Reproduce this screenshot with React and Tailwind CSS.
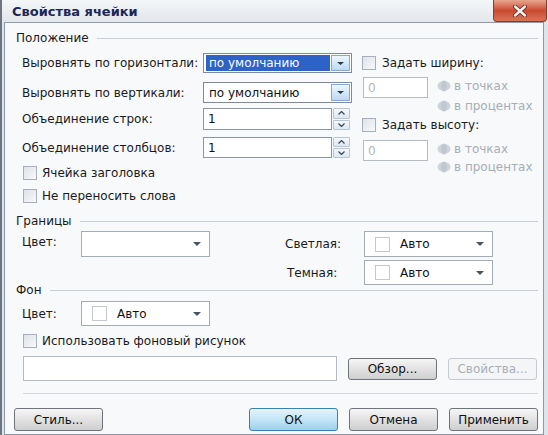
import React from 'react';

const font = { fontFamily: '"DejaVu Sans", Verdana, sans-serif' };

const Heading = ({ title, className = '' }) => (
  <div className={`flex items-center ${className}`}>
    <span>{title}</span>
    <div className="ml-[8px] h-px flex-1 bg-[#c8ced6]" />
  </div>
);

const Checkbox = () => (
  <div className="h-[14px] w-[14px] shrink-0 border border-[#a7afba] bg-gradient-to-br from-[#dfe3e8] to-[#f7f8fa]" />
);

const SmallArrow = ({ up }) => (
  <svg width="7" height="4" viewBox="0 0 7 4" className={up ? 'rotate-180' : ''}>
    <path d="M0.5 0.5 L3.5 3.5 L6.5 0.5" fill="none" stroke="#3b4a5c" strokeWidth="1.3" />
  </svg>
);

const Triangle = () => (
  <svg width="8" height="4" viewBox="0 0 8 4">
    <path d="M0 0 H8 L4 4 Z" fill="#4a5360" />
  </svg>
);

const WinSelect = ({ value, selected }) => (
  <div className="flex h-full w-[149px] items-center border border-[#7d8a9c] bg-white">
    <div
      className={`ml-[2px] flex h-[16px] flex-1 items-center pl-[3px] ${
        selected ? 'bg-[#2d62c8] text-white' : 'text-[#111]'
      }`}
    >
      {value}
    </div>
    <div className="mx-[1px] flex h-[calc(100%-2px)] w-[19px] items-center justify-center border border-[#86a9d2] bg-gradient-to-b from-[#eef6fd] to-[#b9dbf3]">
      <svg width="7" height="3" viewBox="0 0 7 3">
        <path d="M0 0 H7 L3.5 3 Z" fill="#2c3a4c" />
      </svg>
    </div>
  </div>
);

const SpinInput = () => (
  <div className="flex h-full items-stretch">
    <div className="flex w-[129px] items-center border border-[#8a96a6] bg-white pl-[4px] text-[#111]">1</div>
    <div className="ml-[1px] flex w-[17px] flex-col gap-[1px]">
      <div className="flex flex-1 items-center justify-center rounded-[1px] border border-[#b7c6d6] bg-gradient-to-b from-[#f6f9fc] to-[#dde7f1]">
        <SmallArrow up />
      </div>
      <div className="flex flex-1 items-center justify-center rounded-[1px] border border-[#b7c6d6] bg-gradient-to-b from-[#f6f9fc] to-[#dde7f1]">
        <SmallArrow />
      </div>
    </div>
  </div>
);

const Radio = () => (
  <svg width="14" height="12" viewBox="0 0 14 12" className="shrink-0">
    <ellipse cx="7" cy="6" rx="6.5" ry="5" fill="#cfd4da" />
    <ellipse cx="7" cy="6" rx="3" ry="5.5" fill="#c2c8cf" />
  </svg>
);

const SizeBlock = ({ gap }) => (
  <div className="flex">
    <div className="ml-[1px] flex h-[21px] w-[65px] items-center border border-[#b6bcc4] bg-white pl-[4px] text-[#b0b6bd]">
      0
    </div>
    <div className={`ml-[9px] flex flex-col pt-[1px] text-[#a7aeb6] ${gap}`}>
      <div className="flex h-[16px] items-center gap-[3px]">
        <Radio />
        <span>в точках</span>
      </div>
      <div className="flex h-[16px] items-center gap-[3px]">
        <Radio />
        <span>в процентах</span>
      </div>
    </div>
  </div>
);

const ColorSelect = ({ swatch, h = 'h-[26px]' }) => (
  <div className={`flex w-[129px] items-center border border-[#a3abb5] bg-white ${h}`}>
    {swatch ? (
      <>
        <div className="ml-[10px] h-[15px] w-[15px] border border-[#c3c9cf] bg-white" />
        <span className="ml-[10px] flex-1 text-[#111]">Авто</span>
      </>
    ) : (
      <div className="flex-1" />
    )}
    <div className="mr-[8px]">
      <Triangle />
    </div>
  </div>
);

const WinButton = ({ children, primary, disabled }) => (
  <div
    className={`flex h-full w-[89px] items-center justify-center rounded-[3px] border ${
      primary
        ? 'border-[#3c7fb1] bg-gradient-to-b from-[#e5f4fc] via-[#c4e5f6] to-[#98d1ef] text-[#111]'
        : disabled
        ? 'border-[#c5cad0] bg-[#f4f5f7] text-[#a9afb6]'
        : 'border-[#6f747a] bg-gradient-to-b from-[#f6f6f6] via-[#e2e2e2] to-[#cfcfcf] text-[#111]'
    }`}
  >
    {children}
  </div>
);

export default function App() {
  return (
    <div
      className="relative flex h-[435px] w-[548px] flex-col overflow-hidden border-l-2 border-[#6d7580] bg-[#dfe4ea] text-[12px] leading-none text-[#1a1a1a]"
      style={font}
    >
      {/* Title bar */}
      <div className="flex h-[22px] shrink-0 items-stretch bg-gradient-to-b from-[#f4f6f8] to-[#e2e7ed]">
        <div className="flex flex-1 items-center pl-[10px] text-[13px] font-bold text-[#1b2658]">
          Свойства ячейки
        </div>
        <div className="mr-px flex w-[54px] items-center justify-center rounded-b-[4px] border border-t-0 border-[#8c3b2a] bg-gradient-to-b from-[#e7a590] via-[#c9492e] to-[#d7735a]">
          <svg width="16" height="12" viewBox="0 0 16 12">
            <path d="M3 1.5 L13 10.5 M13 1.5 L3 10.5" stroke="#6a2418" strokeWidth="4" strokeLinecap="round" />
            <path d="M3 1.5 L13 10.5 M13 1.5 L3 10.5" stroke="#f4f4f4" strokeWidth="2.4" strokeLinecap="round" />
          </svg>
        </div>
      </div>

      {/* Body */}
      <div className="ml-[2px] mr-[4px] flex flex-1 flex-col border border-[#8d99a8] bg-[#f7f9fb] pl-[11px] pr-[5px] pt-[8px]">
        <Heading title="Положение" className="h-[14px]" />

        <div className="mt-[8px] flex">
          {/* Left column */}
          <div className="ml-[6px] flex w-[330px] flex-col">
            <div className="flex h-[20px] items-center">
              <span className="w-[181px]">Выровнять по горизонтали:</span>
              <WinSelect value="по умолчанию" selected />
            </div>
            <div className="mt-[9px] flex h-[21px] items-center">
              <span className="w-[181px]">Выровнять по вертикали:</span>
              <WinSelect value="по умолчанию" />
            </div>
            <div className="mt-[5px] flex h-[22px] items-center">
              <span className="w-[181px]">Объединение строк:</span>
              <SpinInput />
            </div>
            <div className="mt-[7px] flex h-[21px] items-center">
              <span className="w-[181px]">Объединение столбцов:</span>
              <SpinInput />
            </div>
            <div className="mt-[7px] flex h-[16px] items-center gap-[5px] pl-px">
              <Checkbox />
              <span>Ячейка заголовка</span>
            </div>
            <div className="mt-[7px] flex h-[16px] items-center gap-[5px] pl-px">
              <Checkbox />
              <span>Не переносить слова</span>
            </div>
          </div>

          {/* Right column */}
          <div className="ml-[10px] flex flex-col">
            <div className="flex h-[20px] items-center gap-[6px]">
              <Checkbox />
              <span>Задать ширину:</span>
            </div>
            <div className="mt-[4px]">
              <SizeBlock gap="gap-[4px]" />
            </div>
            <div className="mt-[3px] flex h-[16px] items-center gap-[6px]">
              <Checkbox />
              <span>Задать высоту:</span>
            </div>
            <div className="mt-[7px]">
              <SizeBlock gap="gap-[2px]" />
            </div>
          </div>
        </div>

        <Heading title="Границы" className="mt-[10px] h-[14px]" />
        <div className="mt-[3px] flex">
          <div className="ml-[6px] flex w-[263px] items-start">
            <span className="w-[59px] pt-[5px]">Цвет:</span>
            <ColorSelect />
          </div>
          <div className="flex flex-col gap-[3px]">
            <div className="flex items-center">
              <span className="w-[79px]">Светлая:</span>
              <ColorSelect swatch />
            </div>
            <div className="flex items-center">
              <span className="w-[79px] pl-[2px]">Темная:</span>
              <ColorSelect swatch h="h-[25px]" />
            </div>
          </div>
        </div>

        <Heading title="Фон" className="mt-[-1px] h-[12px]" />
        <div className="ml-[6px] mt-[5px] flex items-center">
          <span className="w-[59px]">Цвет:</span>
          <ColorSelect swatch h="h-[25px]" />
        </div>

        <div className="ml-[7px] mt-[7px] flex h-[16px] items-center gap-[5px]">
          <Checkbox />
          <span>Использовать фоновый рисунок</span>
        </div>

        <div className="ml-[7px] mt-[7px] flex h-[25px] items-center">
          <div className="h-full w-[314px] border border-[#b3bac3] bg-white" />
          <div className="ml-[11px] h-[22px]">
            <WinButton>Обзор...</WinButton>
          </div>
          <div className="ml-[11px] h-[22px]">
            <WinButton disabled>Свойства...</WinButton>
          </div>
        </div>

        <div className="ml-[7px] mt-[12px] h-px bg-[#d3d8de]" />

        <div className="ml-[-2px] mt-[14px] flex h-[23px]">
          <WinButton>Стиль...</WinButton>
          <div className="flex-1" />
          <WinButton primary>ОК</WinButton>
          <div className="ml-[11px] h-full">
            <WinButton>Отмена</WinButton>
          </div>
          <div className="ml-[11px] h-full">
            <WinButton>Применить</WinButton>
          </div>
        </div>
      </div>
    </div>
  );
}
